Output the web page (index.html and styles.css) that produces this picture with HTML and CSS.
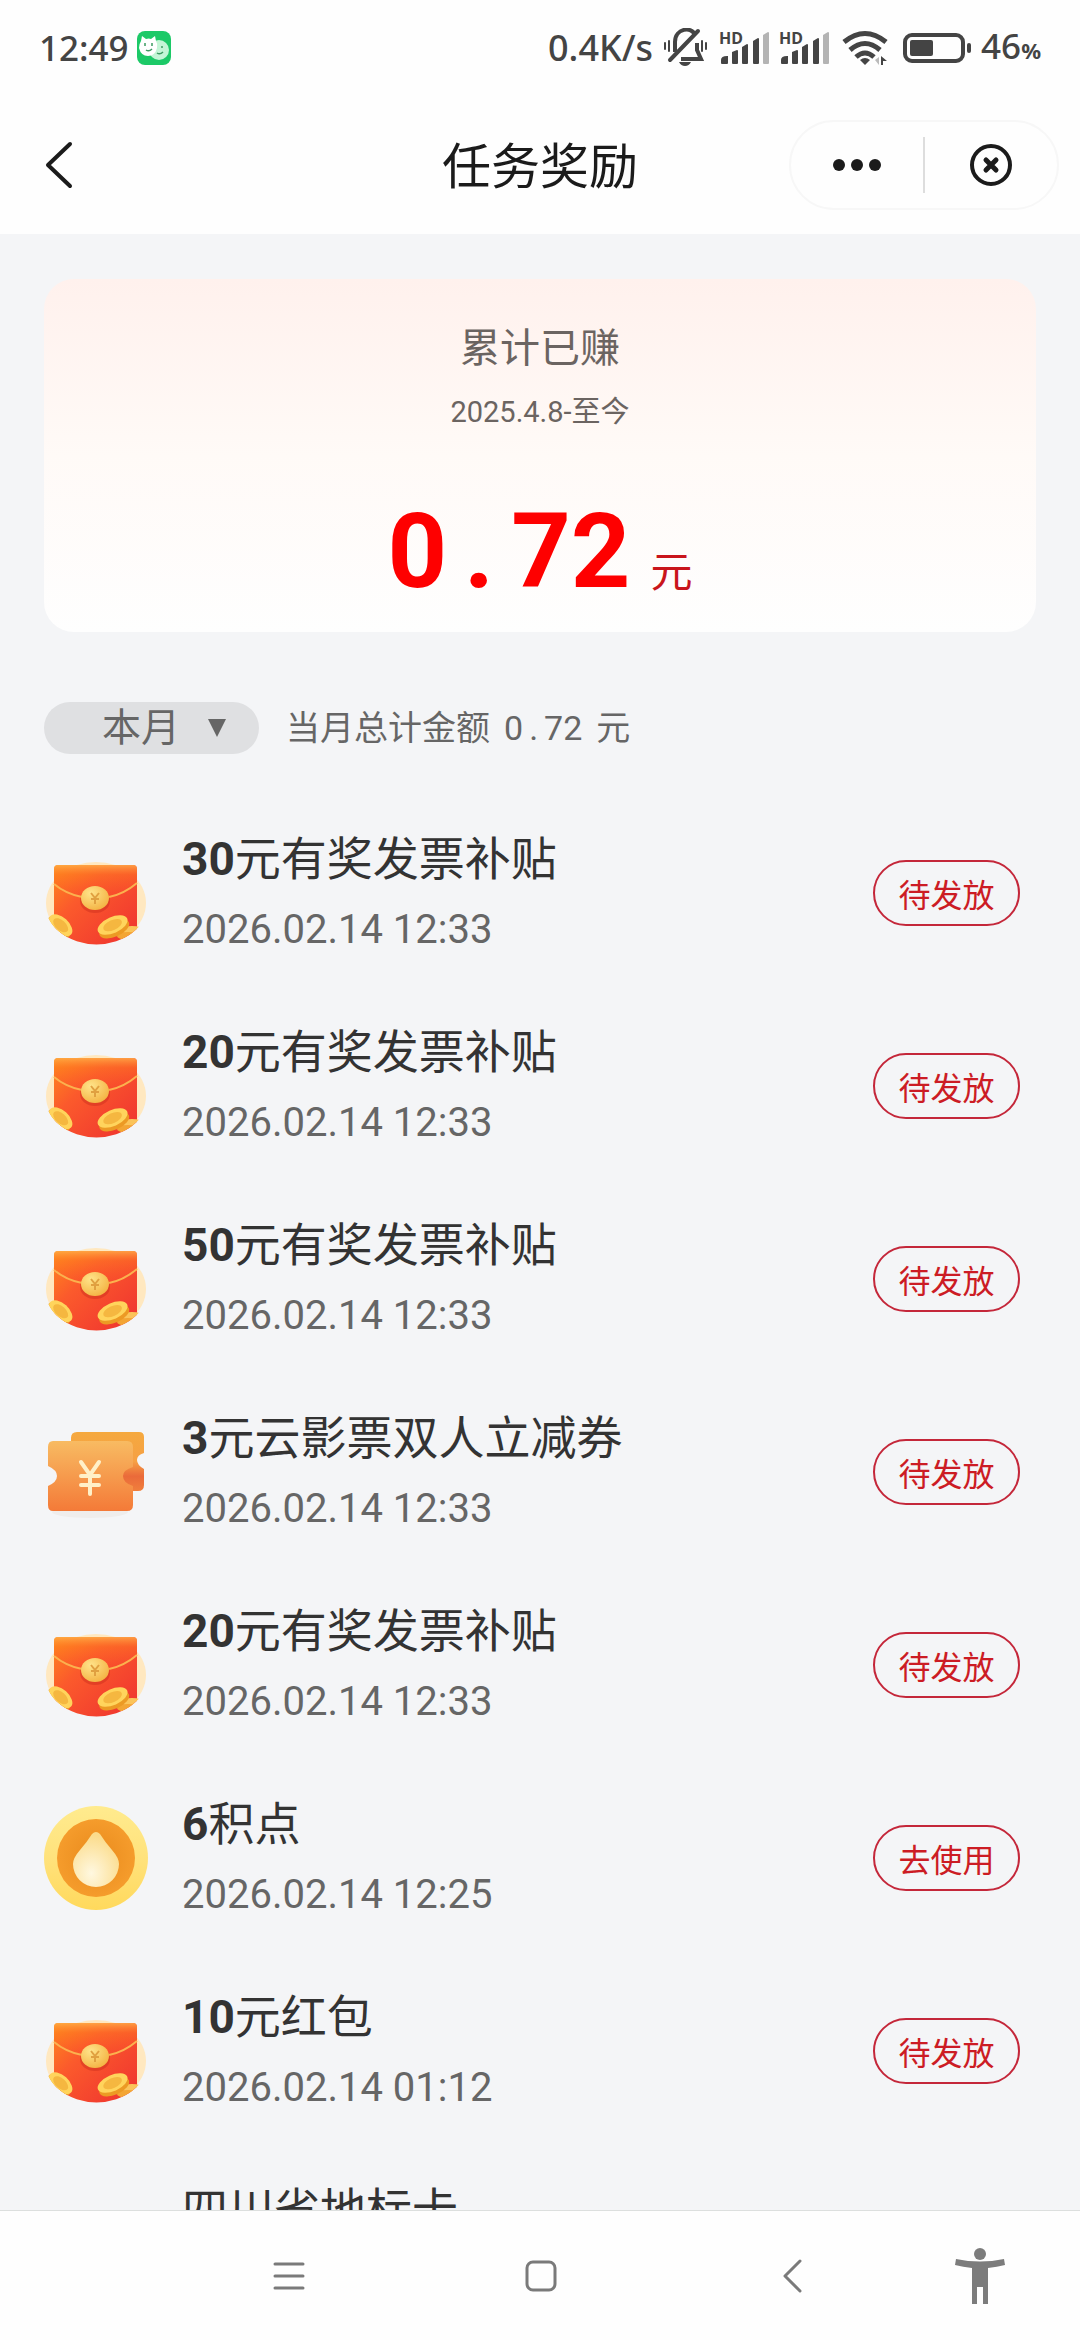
FILE: index.html
```html
<!DOCTYPE html>
<html lang="zh-CN">
<head>
<meta charset="utf-8">
<meta name="viewport" content="width=device-width, initial-scale=1">
<title>任务奖励</title>
<link rel="stylesheet" href="styles.css">
</head>
<body>
<svg class="sprite" aria-hidden="true">
  <defs>
    <linearGradient id="g-red" x1="0" y1="0" x2="1" y2="1">
      <stop offset="0" stop-color="#ff8a1c"/><stop offset=".35" stop-color="#fb5a2c"/><stop offset="1" stop-color="#ee3030"/>
    </linearGradient>
    <linearGradient id="g-flap" x1="0" y1="0" x2="0" y2="1">
      <stop offset="0" stop-color="#ffb04a" stop-opacity=".8"/><stop offset=".3" stop-color="#ff7a20" stop-opacity=".4"/><stop offset="1" stop-color="#f8402c" stop-opacity=".3"/>
    </linearGradient>
    <radialGradient id="g-seal" cx=".35" cy=".3" r=".8">
      <stop offset="0" stop-color="#ffe48a"/><stop offset="1" stop-color="#f3b03f"/>
    </radialGradient>
    <linearGradient id="g-ticket" x1="0" y1="0" x2="0" y2="1">
      <stop offset="0" stop-color="#f8bb62"/><stop offset="1" stop-color="#f47a38"/>
    </linearGradient>
    <linearGradient id="g-back" x1="0" y1="0" x2="0" y2="1">
      <stop offset="0" stop-color="#f5a93f"/><stop offset=".5" stop-color="#f6a044"/><stop offset=".75" stop-color="#ea6a3a"/><stop offset="1" stop-color="#f07f3c"/>
    </linearGradient>
    <linearGradient id="g-rim" x1="0" y1="0" x2="0" y2="1">
      <stop offset="0" stop-color="#ffeb8e"/><stop offset=".5" stop-color="#ffe27c"/><stop offset="1" stop-color="#ffd95c"/>
    </linearGradient>
    <radialGradient id="g-disc">
      <stop offset="0" stop-color="#e98a1c"/><stop offset="1" stop-color="#f59c2c"/>
    </radialGradient>
    <radialGradient id="g-drop" cx=".4" cy=".75" r=".7">
      <stop offset="0" stop-color="#fff8e0"/><stop offset="1" stop-color="#fbdc8c"/>
    </radialGradient>
    <clipPath id="c-envelope"><path d="M0 0H104V62A51.500 41.500 0 0 1 1 62Z"/></clipPath>
  </defs>

  <symbol id="i-envelope" viewBox="0 0 104 104">
    <ellipse cx="52" cy="62" rx="50" ry="41" fill="#ffe8c0"/>
    <g clip-path="url(#c-envelope)">
      <rect x="10" y="24" width="83" height="82" rx="4" fill="url(#g-red)"/>
      <path d="M10 43V28q0-4 4-4H89q4 0 4 4V42Q74 56 51 57 28 56 10 43Z" fill="url(#g-flap)"/>
      <path d="M10 43Q22 53 38 56M65 56Q80 53 93 42" fill="none" stroke="#fbb14e" stroke-width="2"/>
      <ellipse cx="51" cy="60" rx="15" ry="12" fill="#c92c1c" opacity=".45"/>
      <ellipse cx="51" cy="57" rx="14" ry="12" fill="url(#g-seal)"/>
      <path d="M47 52l4 5 4-5M51 57v6M47 58h8" fill="none" stroke="#e0a040" stroke-width="2"/>
      <g transform="rotate(42 16 85)">
        <ellipse cx="16" cy="87" rx="14" ry="8" fill="#ec9a24"/>
        <ellipse cx="16" cy="84" rx="14" ry="8" fill="#ffd45c"/>
        <ellipse cx="16" cy="84" rx="9" ry="5" fill="#f5b740"/>
      </g>
      <ellipse cx="88" cy="89" rx="12" ry="4" fill="#fbc45a"/>
      <ellipse cx="84" cy="95" rx="11" ry="4" fill="#f3a534"/>
      <g transform="rotate(-24 69 85)">
        <ellipse cx="69" cy="88" rx="16" ry="8" fill="#ec9a24"/>
        <ellipse cx="69" cy="84" rx="16" ry="8" fill="#ffd45c"/>
        <ellipse cx="69" cy="84" rx="10" ry="5" fill="#f5b740"/>
      </g>
    </g>
  </symbol>

  <symbol id="i-ticket" viewBox="0 0 104 104">
    <ellipse cx="46" cy="92" rx="38" ry="6" fill="#efedec"/>
    <path d="M33 12H95q5 0 5 5V33q-7 2-7 7t7 9V65q0 6-6 6H33q-6 0-6-6V18q0-6 6-6Z" fill="url(#g-back)"/>
    <path d="M9 21H83q6 0 6 6V47q-10 3-10 9 0 7 10 10V85q0 6-6 6H9q-5 0-5-6V66q9-4 9-10T4 46V27q0-6 5-6Z" fill="url(#g-ticket)"/>
    <path d="M37 42l9 13 9-13M46 55V74M37 56H55M37 65H55" fill="none" stroke="#fff0c8" stroke-width="4" stroke-linecap="round"/>
  </symbol>

  <symbol id="i-coin" viewBox="0 0 104 104">
    <circle cx="52" cy="52" r="52" fill="url(#g-rim)"/>
    <circle cx="52" cy="52" r="39" fill="url(#g-disc)"/>
    <path d="M48 28q4-4 8 0 5 8 12 16 7 8 7 14a23 23 0 0 1-46 0q0-6 7-14 7-8 12-16Z" fill="url(#g-drop)"/>
  </symbol>

  <symbol id="i-bars" viewBox="0 0 50 36">
    <g fill="#444">
      <path d="M2 33V30q0-4 6-4h1v7q0 1-1 1H3q-1 0-1-1Z"/>
      <path d="M13 33V22l5-2q1 0 1 1V33q0 1-1 1H14q-1 0-1-1Z"/>
      <path d="M23 33V17l5-3q1 0 1 1V33q0 1-1 1H24q-1 0-1-1Z"/>
      <path d="M34 33V11l5-3q1 0 1 1V33q0 1-1 1H35q-1 0-1-1Z"/>
      <path d="M44 33V5l5-3q1 0 1 1V33q0 1-1 1H45q-1 0-1-1Z" fill="#b4b4b4"/>
    </g>
  </symbol>
</svg>

<header class="top">
  <div class="status">
    <div class="left">
      <time>12:49</time>
      <svg width="34" height="34" viewBox="0 0 34 34" aria-hidden="true">
        <rect width="34" height="34" rx="8" fill="#1cc967"/>
        <circle cx="22" cy="19" r="10" fill="#c4f5d6"/>
        <path d="M4 10l1-5 4 3q3-1 5 0l4-3 1 5q2 3 1 7-2 8-9 8T2 17q0-4 2-7Z" fill="#fff"/>
        <path d="M8 12v3M15 12v3M9 19q3 2 6-1M25 15v2M20 22q3 2 6-1" fill="none" stroke="#3d9a62" stroke-width="1.500"/>
      </svg>
    </div>
    <div class="right">
      <span class="speed">0.4K/s</span>
      <svg width="46" height="40" viewBox="0 0 46 40" fill="none" stroke="#444" stroke-width="3" stroke-linecap="round" aria-hidden="true">
        <path d="M12 24V14C12 0 29-2 32 7M34 15V22L38 31H18" stroke-width="4" stroke-linecap="butt"/>
        <path d="M7 32L35 3" stroke-width="4"/>
        <path d="M2 15v6M6 13v10M43 15v6M39 13v10" stroke-width="2"/>
        <path d="M16 34H28Q26 38 22 38T16 34Z" fill="#444" stroke="none"/>
      </svg>
      <svg width="50" height="36" viewBox="0 0 50 36"><text x="0" y="14" class="hd">HD</text><use href="#i-bars"/></svg>
      <svg width="50" height="36" viewBox="0 0 50 36"><text x="0" y="14" class="hd">HD</text><use href="#i-bars"/></svg>
      <svg width="54" height="36" viewBox="0 0 54 36" fill="none" stroke="#444" stroke-width="5" aria-hidden="true">
        <path d="M5 12Q26-5 47 12M11 20Q26 7 41 20M17 27Q26 19 35 27"/>
        <path d="M21 30Q26 26 31 30L26 35Z" fill="#444" stroke="none"/>
        <path d="M36 30l4-3v8Z" fill="#bbb" stroke="none"/>
        <path d="M42 35V26l6 5h-4v4Z" fill="#444" stroke="none"/>
      </svg>
      <svg width="68" height="32" viewBox="0 0 68 32" aria-hidden="true">
        <rect x="2" y="3" width="58" height="26" rx="7" fill="none" stroke="#444" stroke-width="4"/>
        <rect x="7" y="8" width="23" height="16" rx="2" fill="#444"/>
        <rect x="64" y="11" width="4" height="10" rx="2" fill="#444"/>
      </svg>
      <span class="battery">46<small>%</small></span>
    </div>
  </div>

  <div class="titlebar">
    <button class="back" aria-label="返回">
      <svg width="28" height="48" viewBox="0 0 28 48"><path d="M25 3L3 24 25 45" fill="none" stroke="#1b1b1b" stroke-width="4" stroke-linecap="round" stroke-linejoin="round"/></svg>
    </button>
    <h1>任务奖励</h1>
    <div class="capsule">
      <button aria-label="更多">
        <svg width="50" height="14" viewBox="0 0 50 14" fill="#1b1b1b"><circle cx="7" cy="7" r="6"/><circle cx="25" cy="7" r="6"/><circle cx="43" cy="7" r="6"/></svg>
      </button>
      <button aria-label="关闭">
        <svg width="44" height="44" viewBox="0 0 44 44" fill="none" stroke="#1b1b1b" stroke-linecap="round"><circle cx="22" cy="22" r="19" stroke-width="4"/><path d="M17 17L27 27M27 17L17 27" stroke-width="5"/></svg>
      </button>
    </div>
  </div>
</header>

<main>
  <section class="card">
    <h2>累计已赚</h2>
    <p class="since">2025.4.8-至今</p>
    <p class="amount"><strong>0<span class="dot">.</span>72</strong><span class="unit">元</span></p>
  </section>

  <div class="filter">
    <label class="month">
      <select aria-label="月份"><option>本月</option></select>
      <svg width="18" height="18" viewBox="0 0 18 18" aria-hidden="true"><path d="M0 0H18L9 18Z" fill="#666"/></svg>
    </label>
    <p class="total">当月总计金额<span class="sum">0<span class="dot">.</span>72</span>元</p>
  </div>

  <ul class="rewards">
    <li><svg class="icon"><use href="#i-envelope"/></svg><div class="info"><h3><b>30</b>元有奖发票补贴</h3><time>2026.02.14 12:33</time></div><button class="state">待发放</button></li>
    <li><svg class="icon"><use href="#i-envelope"/></svg><div class="info"><h3><b>20</b>元有奖发票补贴</h3><time>2026.02.14 12:33</time></div><button class="state">待发放</button></li>
    <li><svg class="icon"><use href="#i-envelope"/></svg><div class="info"><h3><b>50</b>元有奖发票补贴</h3><time>2026.02.14 12:33</time></div><button class="state">待发放</button></li>
    <li><svg class="icon"><use href="#i-ticket"/></svg><div class="info"><h3><b>3</b>元云影票双人立减券</h3><time>2026.02.14 12:33</time></div><button class="state">待发放</button></li>
    <li><svg class="icon"><use href="#i-envelope"/></svg><div class="info"><h3><b>20</b>元有奖发票补贴</h3><time>2026.02.14 12:33</time></div><button class="state">待发放</button></li>
    <li><svg class="icon"><use href="#i-coin"/></svg><div class="info"><h3><b>6</b>积点</h3><time>2026.02.14 12:25</time></div><button class="state">去使用</button></li>
    <li><svg class="icon"><use href="#i-envelope"/></svg><div class="info"><h3><b>10</b>元红包</h3><time>2026.02.14 01:12</time></div><button class="state">待发放</button></li>
    <li><svg class="icon"></svg><div class="info"><h3>四川省地标卡</h3></div></li>
  </ul>
</main>

<nav class="system">
  <button aria-label="最近任务"><svg width="32" height="32" viewBox="0 0 32 32" stroke="#7a7a7a" stroke-width="3" stroke-linecap="round"><path d="M2 4H30M2 16H30M2 28H30"/></svg></button>
  <button aria-label="主屏幕"><svg width="32" height="32" viewBox="0 0 32 32" fill="none" stroke="#7a7a7a" stroke-width="3"><rect x="2" y="2" width="28" height="28" rx="6"/></svg></button>
  <button aria-label="返回"><svg width="20" height="34" viewBox="0 0 20 34" fill="none" stroke="#7a7a7a" stroke-width="3" stroke-linecap="round" stroke-linejoin="round"><path d="M17 2L2 17 17 32"/></svg></button>
  <button aria-label="无障碍"><svg width="50" height="56" viewBox="0 0 50 56" fill="#7c7c7c"><circle cx="25" cy="6" r="6"/><path d="M1 11Q25 16 49 11L50 17Q42 19 33 20V56H28V39H22V56H17V20Q8 19 0 17Z"/></svg></button>
</nav>
</body>
</html>
```
FILE: styles.css
```css
* {
  box-sizing: border-box;
  margin: 0;
  padding: 0;
}

body {
  display: flex;
  flex-direction: column;
  height: 100vh;
  background: #f4f5f7;
  color: #333;
  font-family: Roboto, "Noto Sans CJK SC", sans-serif;
}

button,
select {
  border: 0;
  background: none;
  color: inherit;
  font: inherit;
  appearance: none;
}

svg {
  display: block;
  flex: none;
}

ul {
  list-style: none;
}

.sprite {
  position: absolute;
  width: 0;
  height: 0;
}

.top {
  flex: none;
  background: #fefefe;
}

.status {
  display: flex;
  justify-content: space-between;
  height: 96px;
  padding: 0 39px;
  color: #444;
  font: 500 35px/48px "Noto Sans", sans-serif;
}

.left,
.right {
  display: flex;
  align-items: center;
  gap: 8px;
}

.right {
  gap: 10px;
}

.speed {
  font-size: 36px;
}

.battery small {
  font-size: 22px;
  font-weight: 700;
}

.hd {
  fill: #444;
  font: 700 16px "Noto Sans", sans-serif;
}

.titlebar {
  display: grid;
  grid-template-columns: 1fr auto 1fr;
  align-items: center;
  height: 138px;
  padding: 0 21px;
}

.back {
  justify-self: start;
  padding-left: 24px;
}

h1 {
  padding-top: 6px;
  color: #1b1b1b;
  font-size: 49px;
  font-weight: 400;
  line-height: 64px;
}

.capsule {
  display: flex;
  justify-self: end;
  align-items: center;
  width: 270px;
  height: 90px;
  border: 2px solid #f7f7f7;
  border-radius: 45px;
}

.capsule button {
  display: grid;
  flex: 1;
  place-items: center;
  height: 56px;
}

.capsule button + button {
  border-left: 2px solid #ddd;
}

main {
  flex: 1;
  min-height: 0;
  padding: 45px 44px 0;
  overflow: hidden;
}

.card {
  padding: 40px 0 28px;
  border-radius: 30px;
  background: linear-gradient(#fff1ed, #fffaf7 50%, #fefefe);
  text-align: center;
}

h2 {
  color: #6b6461;
  font-size: 40px;
  font-weight: 400;
  line-height: 60px;
}

.since {
  margin-top: 13px;
  color: #6b6461;
  font-size: 29px;
  line-height: 40px;
}

.amount {
  display: flex;
  justify-content: center;
  align-items: baseline;
  gap: 20px;
  margin-top: 68px;
  line-height: 104px;
}

.amount strong {
  color: #fe0000;
  font-size: 104px;
}

.dot {
  display: inline-block;
  width: 64px;
  text-align: center;
}

.unit {
  color: #c9151b;
  font-size: 42px;
  line-height: 60px;
}

.filter {
  display: flex;
  align-items: center;
  gap: 27px;
  margin-top: 70px;
  color: #666;
}

.month {
  display: flex;
  align-items: center;
  width: 215px;
  height: 52px;
  padding-left: 58px;
  border-radius: 26px;
  background: #dfe0e2;
}

.month select {
  width: 106px;
  font-size: 39px;
  line-height: 52px;
}

.total {
  font-size: 34px;
  line-height: 48px;
}

.sum {
  margin: 0 14px;
}

.sum .dot {
  width: 21px;
}

.rewards {
  margin-top: 42px;
}

.rewards li {
  display: flex;
  align-items: center;
  height: 193px;
  padding-right: 16px;
}

.icon {
  width: 104px;
  height: 104px;
}

.info {
  flex: 1;
  height: 132px;
  padding-left: 34px;
}

h3 {
  font-size: 46px;
  font-weight: 400;
  line-height: 64px;
}

.info time {
  display: block;
  margin-top: 9px;
  color: #666;
  font-size: 40px;
  line-height: 60px;
}

.state {
  width: 147px;
  height: 66px;
  border: 2px solid #c4273a;
  border-radius: 33px;
  color: #cc1c24;
  font-size: 32px;
}

.system {
  display: grid;
  flex: none;
  grid-template-columns: 252fr 252fr 252fr 122fr;
  height: 130px;
  padding: 0 39px 0 163px;
  border-top: 1px solid #dcdfde;
  background: #fefefe;
}

.system button {
  display: grid;
  place-items: center;
}
```
